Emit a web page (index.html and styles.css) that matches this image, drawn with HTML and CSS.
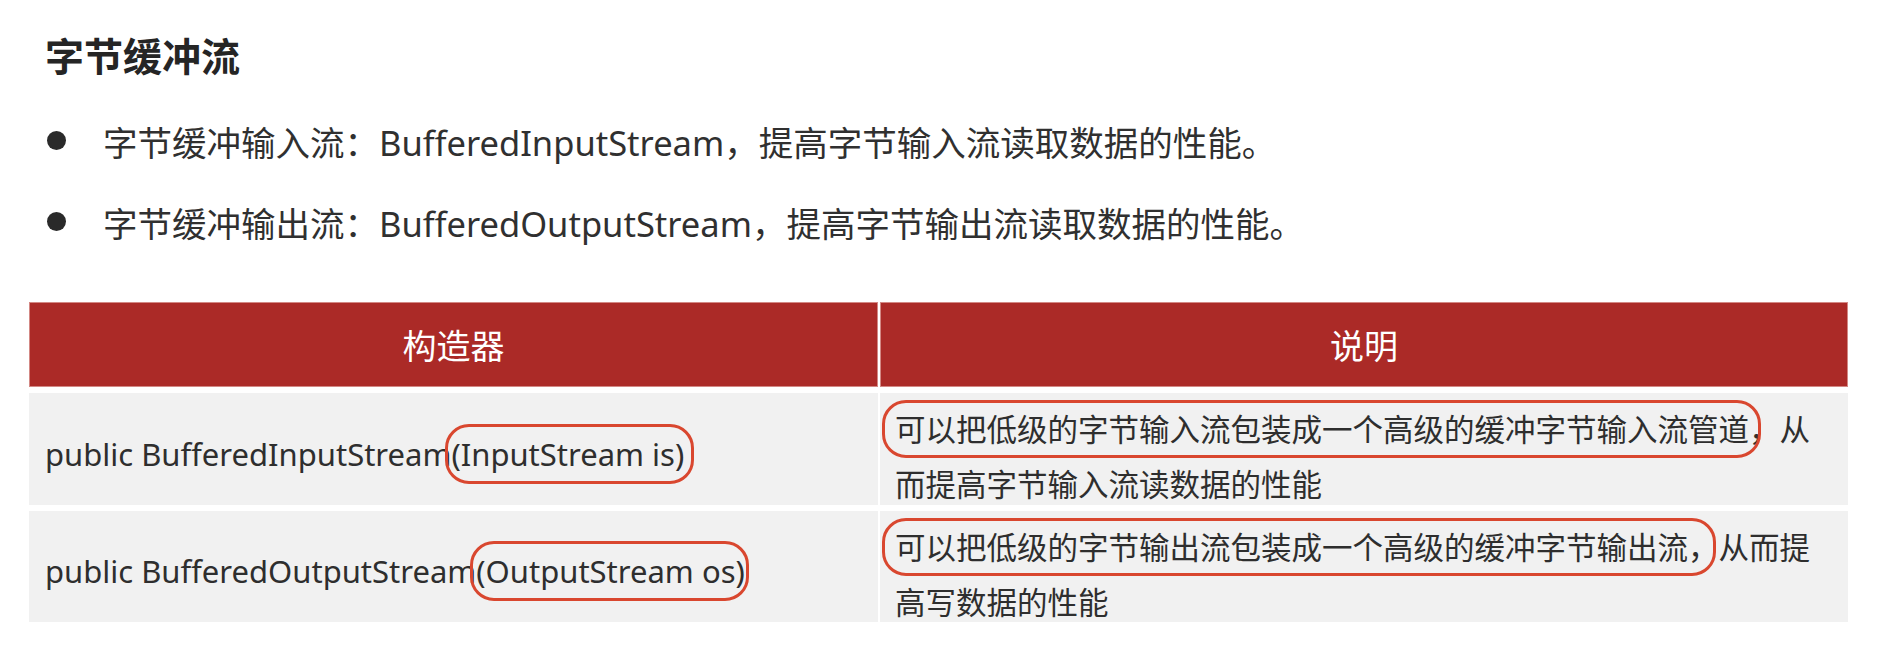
FILE: index.html
```html
<!DOCTYPE html>
<html lang="zh-CN">
<head>
<meta charset="utf-8">
<title>字节缓冲流</title>
<link rel="stylesheet" href="styles.css">
</head>
<body>
<div class="page">
  <h1 class="title">字节缓冲流</h1>
  <ul class="points">
    <li class="point">字节缓冲输入流：BufferedInputStream，提高字节输入流读取数据的性能。</li>
    <li class="point">字节缓冲输出流：BufferedOutputStream，提高字节输出流读取数据的性能。</li>
  </ul>
  <div class="table">
    <div class="th">构造器</div>
    <div class="th">说明</div>
    <div class="td sig">public BufferedInputStream<span class="mark mark-sig1">(InputStream is)</span></div>
    <div class="td desc"><span class="mark mark-d1">可以把低级的字节输入流包装成一个高级的缓冲字节输入流管道</span>，从而提高字节输入流读数据的性能</div>
    <div class="td sig">public BufferedOutputStream<span class="mark mark-sig2">(OutputStream os)</span></div>
    <div class="td desc"><span class="mark mark-d2">可以把低级的字节输出流包装成一个高级的缓冲字节输出流</span>，从而提高写数据的性能</div>
  </div>
</div>
</body>
</html>
```
FILE: styles.css
```css
* { box-sizing: border-box; }
html, body { margin: 0; padding: 0; background: #ffffff; }
body {
  font-family: "Noto Sans", "Noto Sans CJK SC", sans-serif;
  color: #333333;
}
.page {
  width: 1894px;
  height: 662px;
  padding: 31px 0 0 0;
}
.title {
  margin: 0 0 0 45px;
  font-family: "Noto Sans CJK SC", sans-serif;
  font-weight: 700;
  font-size: 39px;
  line-height: 47px;
  color: #252525;
}
.points {
  list-style: none;
  margin: 22px 0 0 0;
  padding: 0;
}
.point {
  display: flex;
  align-items: center;
  gap: 37px;
  height: 81px;
  padding-left: 47px;
  font-size: 34.5px;
  color: #303030;
  white-space: nowrap;
}
.point::before {
  content: "";
  flex: none;
  width: 19px;
  height: 19px;
  border-radius: 50%;
  background: #2a2a2a;
}
.table {
  display: grid;
  grid-template-columns: 849px 968px;
  grid-template-rows: 85px 112px 111px;
  column-gap: 2px;
  row-gap: 6px;
  margin: 40px 0 0 29px;
  width: 1819px;
}
.th {
  display: flex;
  align-items: center;
  justify-content: center;
  background: #ab2a27;
  border: 1px solid #d38884;
  color: #ffffff;
  font-family: "Noto Sans CJK SC", sans-serif;
  font-size: 34px;
}
.td {
  background: #f1f1f1;
  color: #2e2e2e;
}
.sig {
  display: flex;
  align-items: center;
  padding: 9px 0 0 16px;
  font-size: 31px;
  white-space: nowrap;
}
.desc {
  padding: 9px 25px 0 15px;
  font-size: 30.5px;
  line-height: 55px;
}
.mark { position: relative; }
.mark::after {
  content: "";
  position: absolute;
  border: 3px solid #d9472f;
  border-radius: 24px;
  pointer-events: none;
}
.mark-sig1::after { top: -9px; bottom: -9px; left: -6px; right: -10px; }
.mark-sig2::after { top: -9px; bottom: -9px; left: -6px; right: -4px; }
.mark-d1::after { top: -8px; bottom: -8px; left: -13px; right: -12px; }
.mark-d2::after { top: -8px; bottom: -8px; left: -13px; right: -28px; }
```
